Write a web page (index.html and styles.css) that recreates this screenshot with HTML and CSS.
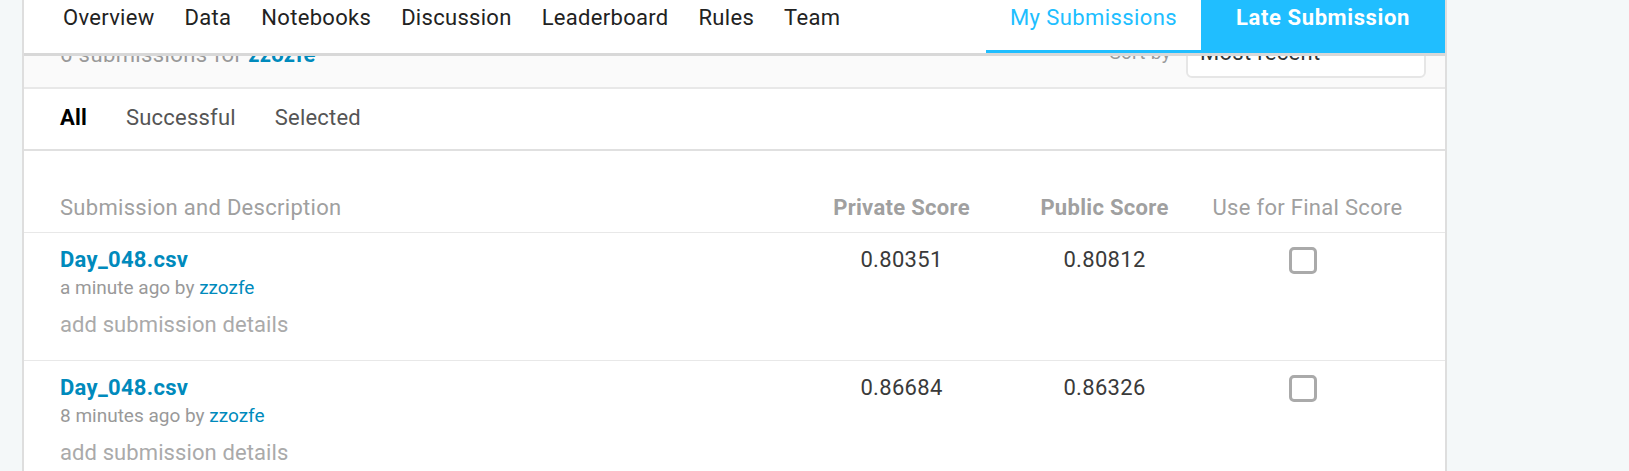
FILE: index.html
```html
<!DOCTYPE html>
<html lang="en">
<head>
<meta charset="utf-8">
<title>My Submissions</title>
<link rel="stylesheet" href="styles.css">
</head>
<body>
<div class="card">
  <nav class="nav">
    <div class="nav-links">
      <a class="nav-item">Overview</a>
      <a class="nav-item">Data</a>
      <a class="nav-item">Notebooks</a>
      <a class="nav-item">Discussion</a>
      <a class="nav-item">Leaderboard</a>
      <a class="nav-item">Rules</a>
      <a class="nav-item">Team</a>
    </div>
    <a class="nav-mine">My Submissions</a>
    <a class="nav-late">Late Submission</a>
  </nav>

  <div class="filter">
    <div class="count">6 submissions for <span class="user">zzozfe</span></div>
    <div class="sort">
      <span class="sort-label">Sort by</span>
      <div class="select">Most recent<span class="caret"></span></div>
    </div>
  </div>

  <div class="tabs">
    <span class="tab tab-active">All</span>
    <span class="tab">Successful</span>
    <span class="tab">Selected</span>
  </div>

  <div class="thead">
    <div class="col-desc">Submission and Description</div>
    <div class="col-score col-bold">Private Score</div>
    <div class="col-score col-bold">Public Score</div>
    <div class="col-score">Use for Final Score</div>
  </div>

  <div class="row">
    <div class="col-desc">
      <div class="file">Day_048.csv</div>
      <div class="meta">a minute ago by <span class="meta-user">zzozfe</span></div>
      <div class="details">add submission details</div>
    </div>
    <div class="col-score score">0.80351</div>
    <div class="col-score score">0.80812</div>
    <div class="col-score"><span class="check"></span></div>
  </div>

  <div class="row">
    <div class="col-desc">
      <div class="file">Day_048.csv</div>
      <div class="meta">8 minutes ago by <span class="meta-user">zzozfe</span></div>
      <div class="details">add submission details</div>
    </div>
    <div class="col-score score">0.86684</div>
    <div class="col-score score">0.86326</div>
    <div class="col-score"><span class="check"></span></div>
  </div>
</div>
</body>
</html>
```

FILE: styles.css
```css
* { box-sizing: border-box; }

html, body {
  margin: 0;
  padding: 0;
  background: #f4f8f9;
  height: 100%;
  overflow: hidden;
}

body {
  font-family: Roboto, "Liberation Sans", sans-serif;
  font-size: 22px;
  line-height: 26px;
  letter-spacing: 0.3px;
  color: #333;
}

.card {
  margin-left: 22px;
  width: 1425px;
  min-height: 100%;
  background: #fff;
  border-left: 2px solid #dedede;
  border-right: 2px solid #dedede;
}

/* top navigation */
.nav {
  position: relative;
  z-index: 2;
  display: flex;
  height: 56px;
  background: #fff;
  border-bottom: 3px solid #d8d8d8;
  padding-left: 39px;
  letter-spacing: 0.3px;
}

.nav-links {
  display: flex;
  gap: 30px;
}

.nav-item {
  padding-top: 5px;
  color: #222;
}

.nav-mine {
  margin-left: auto;
  padding: 5px 24px 0;
  color: #20beff;
  letter-spacing: 0.4px;
  border-bottom: 3px solid #20beff;
}

.nav-late {
  width: 244px;
  padding-top: 5px;
  text-align: center;
  font-weight: 700;
  letter-spacing: 0.6px;
  color: #fff;
  background: #20beff;
}

/* filter header (partially under the nav) */
.filter {
  margin-top: -30px;
  display: flex;
  justify-content: space-between;
  align-items: center;
  background: #fafafa;
  padding: 2px 19px 9px 36px;
  border-bottom: 2px solid #e8e8e8;
}

.count {
  padding-top: 3px;
  color: #999;
  letter-spacing: 0.4px;
}

.user {
  color: #008abc;
  font-weight: 700;
}

.sort {
  display: flex;
  align-items: center;
  gap: 15px;
}

.sort-label {
  font-size: 19px;
  line-height: 22px;
  color: #999;
}

.select {
  position: relative;
  width: 240px;
  height: 50px;
  display: flex;
  align-items: center;
  padding-left: 12px;
  background: #fff;
  border: 2px solid #e6e6e6;
  border-radius: 6px;
  color: #333;
}

.caret {
  position: absolute;
  right: 20px;
  top: 20px;
  width: 0;
  height: 0;
  border-left: 5px solid transparent;
  border-right: 5px solid transparent;
  border-top: 6px solid #555;
}

/* tabs */
.tabs {
  display: flex;
  gap: 39px;
  padding: 16px 36px 18px;
  border-bottom: 2px solid #e0e0e0;
}

.tab {
  color: #555;
  letter-spacing: 0.2px;
}

.tab-active {
  color: #000;
  font-weight: 700;
}

/* table */
.thead,
.row {
  display: flex;
  padding: 0 36px;
  border-bottom: 1px solid #e8e8e8;
}

.thead {
  padding-top: 44px;
  padding-bottom: 11px;
  color: #a0a0a0;
}

.row {
  padding-top: 14px;
  padding-bottom: 22px;
}

.col-desc {
  flex: 1;
}

.col-score {
  width: 203px;
  text-align: center;
}

.col-bold {
  font-weight: 700;
}

.file {
  color: #008abc;
  font-weight: 700;
}

.meta {
  margin-top: 4px;
  font-size: 19px;
  line-height: 22px;
  letter-spacing: 0;
  color: #999;
}

.meta-user {
  color: #008abc;
}

.details {
  margin-top: 13px;
  color: #aaa;
  letter-spacing: 0.1px;
}

.score {
  color: #3a3a3a;
  font-weight: 400;
}

.check {
  display: inline-block;
  width: 28px;
  height: 27px;
  margin-right: 9px;
  border: 3px solid #aaa;
  border-radius: 5px;
  vertical-align: top;
}
```
